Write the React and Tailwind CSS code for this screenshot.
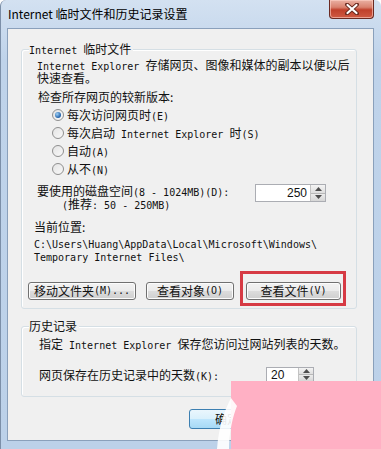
import React from 'react';

const cjk = "font-['Noto_Sans_CJK_SC',sans-serif]";

function M({ children }) {
  return <span className="font-['DejaVu_Sans_Mono',monospace] text-[10px] leading-[0px]">{children}</span>;
}

function Line({ h, className = '', children }) {
  return (
    <div className={`whitespace-nowrap ${h} ${className}`}>
      {children}
    </div>
  );
}

function Radio({ checked, children }) {
  return (
    <div className="h-[18px] flex items-center whitespace-nowrap">
      <span className="ml-[15px] w-[12px] h-[12px] shrink-0 rounded-full border border-[#8f8f8f] bg-[linear-gradient(135deg,#e4e4e4,#f8f8f8)] flex items-center justify-center">
        {checked && (
          <span className="w-[6px] h-[6px] rounded-full bg-[radial-gradient(circle_at_35%_35%,#9fd0f5,#1f5fa8_70%)]" />
        )}
      </span>
      <span className="ml-[3px] leading-[12px]">{children}</span>
    </div>
  );
}

function Spin({ value, right, className }) {
  return (
    <div className={`flex shrink-0 bg-white border border-[#abadb3] ${className}`}>
      <div className={`flex-1 flex items-center text-[12px] leading-[12px] font-['Liberation_Sans',sans-serif] ${right ? 'justify-end pr-[3px]' : 'pl-[4px]'}`}>
        {value}
      </div>
      <div className="w-[15px] flex flex-col border-l border-[#c3c3c3]">
        <div className="flex-1 flex items-center justify-center bg-[linear-gradient(#f4f4f4,#dedede)] border-b border-[#b8b8b8]">
          <svg width="7" height="4" viewBox="0 0 7 4"><path d="M0 4 L3.5 0 L7 4Z" fill="#4d4d4d" /></svg>
        </div>
        <div className="flex-1 flex items-center justify-center bg-[linear-gradient(#ececec,#d6d6d6)]">
          <svg width="7" height="4" viewBox="0 0 7 4"><path d="M0 0 L3.5 4 L7 0Z" fill="#4d4d4d" /></svg>
        </div>
      </div>
    </div>
  );
}

function Button({ children, className }) {
  return (
    <div className={`h-[18px] flex items-center justify-center whitespace-nowrap rounded-[3px] border border-[#707070] bg-[linear-gradient(#f2f2f2_0%,#ebebeb_50%,#dddddd_50%,#cfcfcf_100%)] shadow-[inset_0_0_0_1px_#fcfcfc] text-[12px] leading-[12px] ${className}`}>
      {children}
    </div>
  );
}

export default function App() {
  return (
    <div className={`w-[381px] h-[449px] relative overflow-hidden rounded-t-[6px] border-l border-[#7c8fa8] bg-[linear-gradient(#d3e1f1,#bfd3ea_60px,#bcd1e9)] text-[#111] ${cjk}`}>
      {/* Title bar */}
      <div className="h-[28px] flex items-start">
        <div className="pl-[7px] pt-[6px] text-[12px] leading-[16px] text-black">Internet 临时文件和历史记录设置</div>
        <div className="ml-auto mr-[7px] w-[45px] h-[19px] rounded-b-[4px] border border-t-0 border-[#6b2a22] bg-[linear-gradient(#eab1a3,#d9826f_40%,#c0402b_55%,#cf5a43)] flex items-center justify-center shadow-[inset_0_0_0_1px_rgba(255,210,200,0.6)]">
          <svg width="14" height="12" viewBox="0 0 14 12">
            <path d="M2 1.5 L12 10.5 M12 1.5 L2 10.5" stroke="#6a2a20" strokeWidth="4" strokeLinecap="round" />
            <path d="M2.5 2 L11.5 10 M11.5 2 L2.5 10" stroke="#ffffff" strokeWidth="2.2" strokeLinecap="round" />
          </svg>
        </div>
      </div>

      {/* Client area */}
      <div className="ml-[6px] w-[367px] h-[413px] border border-[#8aa0bb] bg-[#f0f0f0] text-[12px]">
        {/* Group 1 */}
        <div className="relative mt-[20px] ml-[13px] w-[336px] h-[260px] rounded-[3px] border border-[#d5dfe5] shadow-[inset_1px_1px_0_#fff] pl-[15px] pt-[8px]">
          <div className="absolute -top-[8px] left-[7px] h-[14px] leading-[14px] bg-[#f0f0f0] pr-[2px] whitespace-nowrap">
            <M>Internet </M>临时文件
          </div>
          <Line h="h-[13px] leading-[13px]"><M>Internet Explorer </M>存储网页、图像和媒体的副本以便以后</Line>
          <Line h="h-[13px] leading-[13px]">快速查看。</Line>
          <Line h="h-[13px] leading-[13px]" className="mt-[6px] ml-[1px]">检查所存网页的较新版本:</Line>
          <div className="mt-[3px]">
            <Radio checked>每次访问网页时<M>(E)</M></Radio>
            <Radio>每次启动<M> Internet Explorer </M>时<M>(S)</M></Radio>
            <Radio>自动<M>(A)</M></Radio>
            <Radio>从不<M>(N)</M></Radio>
          </div>
          <div className="mt-[6px] h-[26px] flex">
            <div className="w-[218px]">
              <Line h="h-[13px] leading-[13px]">要使用的磁盘空间<M>(8 - 1024MB)(D):</M></Line>
              <Line h="h-[13px] leading-[13px]" className="pl-[25px]"><M>(</M>推荐<M>: 50 - 250MB)</M></Line>
            </div>
            <Spin value="250" right className="w-[71px] h-[18px]" />
          </div>
          <Line h="h-[12px] leading-[12px]" className="mt-[11px] -ml-[3px]">当前位置:</Line>
          <div className="mt-[3px] -ml-[3px]">
            <Line h="h-[13px] leading-[13px]"><M>C:\Users\Huang\AppData\Local\Microsoft\Windows\</M></Line>
            <Line h="h-[13px] leading-[13px]"><M>Temporary Internet Files\</M></Line>
          </div>
          <div className="mt-[20px] -ml-[9px] flex">
            <Button className="w-[108px]">移动文件夹<M>(M)...</M></Button>
            <Button className="ml-[10px] w-[88px]">查看对象<M>(O)</M></Button>
            <div className="relative ml-[12px]">
              <Button className="w-[95px]">查看文件<M>(V)</M></Button>
              <div className="absolute -left-[6px] -right-[5px] -top-[11px] -bottom-[6px] border-[3px] border-[#d63a44]" />
            </div>
          </div>
        </div>

        {/* Group 2 */}
        <div className="relative mt-[17px] ml-[13px] w-[336px] h-[71px] rounded-[3px] border border-[#d5dfe5] shadow-[inset_1px_1px_0_#fff] pl-[17px] pt-[11px]">
          <div className="absolute -top-[8px] left-[7px] h-[14px] leading-[14px] bg-[#f0f0f0] pr-[2px]">历史记录</div>
          <Line h="h-[12px] leading-[12px]">指定<M> Internet Explorer </M>保存您访问过网站列表的天数。</Line>
          <div className="mt-[17px] h-[15px] flex items-center">
            <Line h="h-[12px] leading-[12px]" className="w-[227px]">网页保存在历史记录中的天数<M>(K):</M></Line>
            <Spin value="20" className="w-[48px] h-[15px]" />
          </div>
        </div>

        {/* Dialog buttons */}
        <div className="mt-[12px] ml-[181px] flex gap-[7px]">
          <div className="w-[76px] h-[20px] rounded-[3px] border border-[#3c7fb1] bg-[linear-gradient(#eaf6fd_0%,#d9f0fc_50%,#bee6fd_50%,#a7d9f5_100%)] flex items-center justify-center leading-[12px]">确定</div>
          <div className="w-[76px] h-[20px] rounded-[3px] border border-[#707070] bg-[linear-gradient(#f2f2f2_0%,#ebebeb_50%,#dddddd_50%,#cfcfcf_100%)] flex items-center justify-center leading-[12px]">取消</div>
        </div>
      </div>

      {/* Watermark overlay */}
      <div className="absolute left-[230px] top-[381px] right-0 bottom-0 bg-[#ffb0c4]" />
      <svg className="absolute left-[214px] top-[398px]" width="24" height="51" viewBox="0 0 24 51">
        <path d="M16 0 C10 12 4 26 2 51 L14 51 C14 34 18 18 22 8 Z" fill="#ffffff" opacity="0.9" />
      </svg>
    </div>
  );
}
